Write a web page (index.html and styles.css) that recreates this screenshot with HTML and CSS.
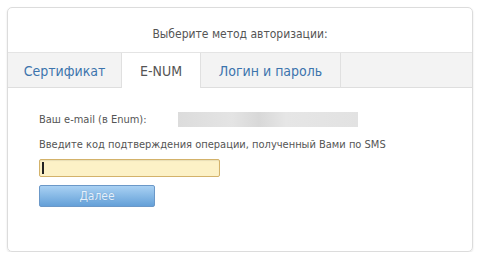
FILE: index.html
```html
<!DOCTYPE html>
<html lang="ru">
<head>
<meta charset="utf-8">
<link rel="stylesheet" href="styles.css">
</head>
<body>
<div class="card">
  <div class="head">Выберите метод авторизации:</div>
  <div class="tabs">
    <div class="tab">Сертификат</div>
    <div class="tab active">E-NUM</div>
    <div class="tab">Логин и пароль</div>
  </div>
  <div class="content">
    <div class="row">
      <span class="label">Ваш e-mail (в Enum):</span>
      <span class="blur"></span>
    </div>
    <div class="hint">Введите код подтверждения операции, полученный Вами по SMS</div>
    <div class="input"><span class="caret"></span></div>
    <div class="btn">Далее</div>
  </div>
</div>
</body>
</html>
```
FILE: styles.css
```css
html, body { margin: 0; padding: 0; background: #fff; }
body { font-family: "DejaVu Sans Condensed", "DejaVu Sans", Verdana, sans-serif; color: #555; }
.card {
  margin: 7px 0 0 7px;
  width: 464px;
  height: 243px;
  border: 1px solid #dcdcdc;
  border-radius: 5px;
  box-shadow: 0 1px 2px rgba(0,0,0,0.12);
  overflow: hidden;
}
.head {
  height: 45px;
  box-sizing: border-box;
  padding-top: 19px;
  text-align: center;
  font-size: 12px;
  color: #555;
  border-bottom: 1px solid #e4e4e4;
}
.tabs {
  display: flex;
  height: 34px;
  background: #f3f3f3;
  border-bottom: 1px solid #dedede;
}
.tab {
  box-sizing: border-box;
  height: 35px;
  border-right: 1px solid #e0e0e0;
  font-size: 14px;
  color: #3c74ad;
  display: flex;
  align-items: center;
  justify-content: center;
}
.tab:nth-child(1) { width: 114px; }
.tab:nth-child(2) { width: 79px; }
.tab:nth-child(3) { width: 140px; }
.tab.active { background: #fff; color: #555; }
.content { padding: 24px 0 0 31px; font-size: 11px; }
.row { display: flex; align-items: center; height: 15px; }
.label { width: 139px; }
.blur {
  width: 180px;
  height: 15px;
  background: linear-gradient(90deg, #dcdcdc 0%, #e4e4e4 30%, #d8d8d8 45%, #e6e6e6 60%, #e2e2e2 100%);
}
.hint { margin-top: 10px; height: 15px; line-height: 15px; }
.input {
  margin-top: 7px;
  width: 181px;
  height: 18px;
  box-sizing: border-box;
  background: #fcf1c6;
  border: 1px solid #d3b26a;
  border-radius: 2px;
  box-shadow: inset 0 1px 1px rgba(0,0,0,0.08);
  display: flex;
  align-items: center;
  padding-left: 2px;
}
.caret { width: 2px; height: 12px; background: #222; }
.btn {
  margin-top: 8px;
  width: 116px;
  height: 22px;
  box-sizing: border-box;
  border: 1px solid #6b98c8;
  border-radius: 2px;
  background: linear-gradient(#a9d1f3, #64a0d8);
  color: #e4f0fb;
  font-size: 12px;
  text-shadow: 0 0 1px rgba(60,110,170,0.5);
  display: flex;
  align-items: center;
  justify-content: center;
}
```
